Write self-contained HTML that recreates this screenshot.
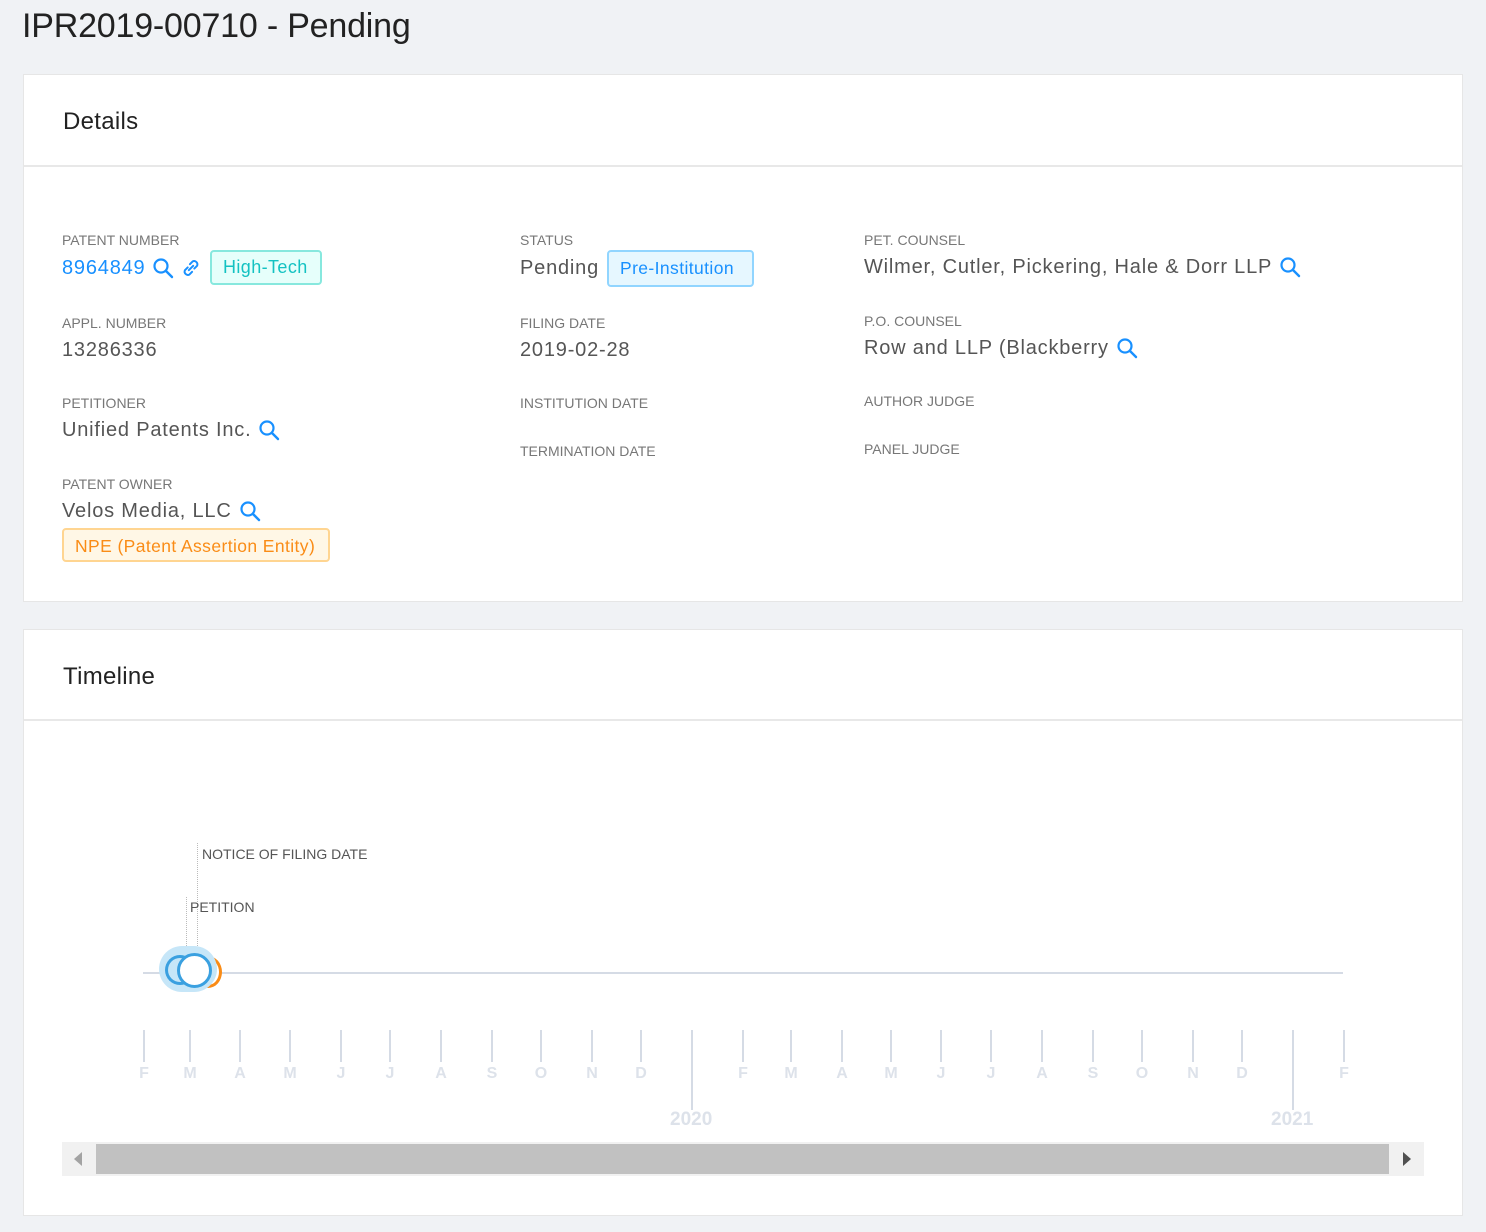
<!DOCTYPE html>
<html><head><meta charset="utf-8"><style>
*{margin:0;padding:0;box-sizing:border-box}
body{width:1486px;height:1232px;background:#f0f2f5;font-family:"Liberation Sans",sans-serif;position:relative;overflow:hidden;color:#555}
.a{position:absolute;white-space:nowrap}
.card{position:absolute;left:23px;width:1440px;background:#fff;border:1px solid #e6e6e6}
.hd{position:absolute;left:0;right:0;border-bottom:2px solid #e8e8e8}
.lb{position:absolute;font-size:14px;line-height:16px;color:#777;white-space:nowrap}
.v{position:absolute;font-size:20px;line-height:24px;color:#555;white-space:nowrap;letter-spacing:0.8px;display:flex;align-items:center}
.v svg{margin-left:7px;flex:none}
.tag{position:absolute;font-size:18px;line-height:32px;border-radius:4px;padding:0 11px;white-space:nowrap;letter-spacing:0.4px}
.m{position:absolute;top:1030px;width:2px;height:32px;background:#d5dbe5}
.ml{position:absolute;top:1065px;font-size:16px;font-weight:bold;color:#dde2ea;width:20px;margin-left:-10px;text-align:center}
</style></head><body>
<div class="a" style="left:22px;top:4px;font-size:34px;line-height:44px;color:#222;letter-spacing:-0.2px">IPR2019-00710 - Pending</div>

<div class="card" style="top:74px;height:528px">
 <div class="hd" style="top:0;height:92px"></div>
 <div class="a" style="left:39px;top:32px;font-size:24px;line-height:30px;color:#222;letter-spacing:0.3px">Details</div>
</div>

<div class="lb" style="left:62px;top:232px">PATENT NUMBER</div>
<div class="v" style="left:62px;top:256px;color:#1890ff">8964849<svg width="22" height="22" viewBox="0 0 22 22"><circle cx="9" cy="9" r="6.5" fill="none" stroke="#1890ff" stroke-width="2.2"/><path d="M14 14l6 6" stroke="#1890ff" stroke-width="2.4" stroke-linecap="round"/></svg><svg width="22" height="22" viewBox="0 0 20 20" style="margin-left:6px"><path d="M8 12l4-4M7 9.5l-2.5 2.5a3 3 0 0 0 4 4L11 13.5M13 10.5l2.5-2.5a3 3 0 0 0-4-4L9 6.5" fill="none" stroke="#1890ff" stroke-width="1.8" stroke-linecap="round"/></svg></div>
<div class="tag" style="left:210px;top:250px;width:112px;background:#e6fffb;border:2px solid #87e8de;color:#13c2c2;line-height:31px">High-Tech</div>

<div class="lb" style="left:62px;top:315px">APPL. NUMBER</div>
<div class="v" style="left:62px;top:338px">13286336</div>
<div class="lb" style="left:62px;top:395px">PETITIONER</div>
<div class="v" style="left:62px;top:418px">Unified Patents Inc.<svg width="22" height="22" viewBox="0 0 22 22"><circle cx="9" cy="9" r="6.5" fill="none" stroke="#1890ff" stroke-width="2.2"/><path d="M14 14l6 6" stroke="#1890ff" stroke-width="2.4" stroke-linecap="round"/></svg></div>
<div class="lb" style="left:62px;top:476px">PATENT OWNER</div>
<div class="v" style="left:62px;top:499px">Velos Media, LLC<svg width="22" height="22" viewBox="0 0 22 22"><circle cx="9" cy="9" r="6.5" fill="none" stroke="#1890ff" stroke-width="2.2"/><path d="M14 14l6 6" stroke="#1890ff" stroke-width="2.4" stroke-linecap="round"/></svg></div>
<div class="tag" style="left:62px;top:528px;width:268px;height:34px;background:#fff7e6;border:2px solid #ffd591;color:#fa8c16;line-height:32px;font-size:17.5px">NPE (Patent Assertion Entity)</div>

<div class="lb" style="left:520px;top:232px">STATUS</div>
<div class="v" style="left:520px;top:256px">Pending</div>
<div class="tag" style="left:607px;top:250px;width:147px;background:#e6f7ff;border:2px solid #91d5ff;color:#1890ff;line-height:33px;font-size:17.5px">Pre-Institution</div>
<div class="lb" style="left:520px;top:315px">FILING DATE</div>
<div class="v" style="left:520px;top:338px">2019-02-28</div>
<div class="lb" style="left:520px;top:395px">INSTITUTION DATE</div>
<div class="lb" style="left:520px;top:443px">TERMINATION DATE</div>

<div class="lb" style="left:864px;top:232px">PET. COUNSEL</div>
<div class="v" style="left:864px;top:255px">Wilmer, Cutler, Pickering, Hale &amp; Dorr LLP<svg width="22" height="22" viewBox="0 0 22 22"><circle cx="9" cy="9" r="6.5" fill="none" stroke="#1890ff" stroke-width="2.2"/><path d="M14 14l6 6" stroke="#1890ff" stroke-width="2.4" stroke-linecap="round"/></svg></div>
<div class="lb" style="left:864px;top:313px">P.O. COUNSEL</div>
<div class="v" style="left:864px;top:336px">Row and LLP (Blackberry<svg width="22" height="22" viewBox="0 0 22 22"><circle cx="9" cy="9" r="6.5" fill="none" stroke="#1890ff" stroke-width="2.2"/><path d="M14 14l6 6" stroke="#1890ff" stroke-width="2.4" stroke-linecap="round"/></svg></div>
<div class="lb" style="left:864px;top:393px">AUTHOR JUDGE</div>
<div class="lb" style="left:864px;top:441px">PANEL JUDGE</div>

<div class="card" style="top:629px;height:587px">
 <div class="hd" style="top:0;height:91px"></div>
 <div class="a" style="left:39px;top:32px;font-size:24px;line-height:30px;color:#222;letter-spacing:0.3px">Timeline</div>
</div>

<div class="a" style="left:197px;top:843px;height:107px;border-left:1px dotted #bbb"></div>
<div class="a" style="left:186px;top:897px;height:53px;border-left:1px dotted #bbb"></div>
<div class="a" style="left:202px;top:846px;font-size:14px;color:#555">NOTICE OF FILING DATE</div>
<div class="a" style="left:190px;top:899px;font-size:14px;color:#555">PETITION</div>
<div class="a" style="left:143px;top:972px;width:1200px;height:2px;background:#d5dbe5"></div>
<div class="a" style="left:194px;top:956px;width:28px;height:32px;border-radius:50%;border:3px solid #fa8c16;background:#fff"></div>
<div class="a" style="left:159px;top:946px;width:58px;height:46px;border-radius:23px;background:#c6e6f8"></div>
<div class="a" style="left:165px;top:955px;width:30px;height:30px;border-radius:50%;border:3px solid #3aa0e0;border-right-color:transparent"></div>
<div class="a" style="left:177px;top:953px;width:35px;height:35px;border-radius:50%;border:3.5px solid #3aa0e0;background:#fff"></div>

<div class="m" style="left:143px"></div><div class="ml" style="left:144px">F</div>
<div class="m" style="left:189px"></div><div class="ml" style="left:190px">M</div>
<div class="m" style="left:239px"></div><div class="ml" style="left:240px">A</div>
<div class="m" style="left:289px"></div><div class="ml" style="left:290px">M</div>
<div class="m" style="left:340px"></div><div class="ml" style="left:341px">J</div>
<div class="m" style="left:389px"></div><div class="ml" style="left:390px">J</div>
<div class="m" style="left:440px"></div><div class="ml" style="left:441px">A</div>
<div class="m" style="left:491px"></div><div class="ml" style="left:492px">S</div>
<div class="m" style="left:540px"></div><div class="ml" style="left:541px">O</div>
<div class="m" style="left:591px"></div><div class="ml" style="left:592px">N</div>
<div class="m" style="left:640px"></div><div class="ml" style="left:641px">D</div>
<div class="m" style="left:691px;height:80px"></div><div class="a" style="left:670px;top:1109px;font-size:19px;font-weight:bold;color:#dde2ea">2020</div>
<div class="m" style="left:742px"></div><div class="ml" style="left:743px">F</div>
<div class="m" style="left:790px"></div><div class="ml" style="left:791px">M</div>
<div class="m" style="left:841px"></div><div class="ml" style="left:842px">A</div>
<div class="m" style="left:890px"></div><div class="ml" style="left:891px">M</div>
<div class="m" style="left:940px"></div><div class="ml" style="left:941px">J</div>
<div class="m" style="left:990px"></div><div class="ml" style="left:991px">J</div>
<div class="m" style="left:1041px"></div><div class="ml" style="left:1042px">A</div>
<div class="m" style="left:1092px"></div><div class="ml" style="left:1093px">S</div>
<div class="m" style="left:1141px"></div><div class="ml" style="left:1142px">O</div>
<div class="m" style="left:1192px"></div><div class="ml" style="left:1193px">N</div>
<div class="m" style="left:1241px"></div><div class="ml" style="left:1242px">D</div>
<div class="m" style="left:1292px;height:80px"></div><div class="a" style="left:1271px;top:1109px;font-size:19px;font-weight:bold;color:#dde2ea">2021</div>
<div class="m" style="left:1343px"></div><div class="ml" style="left:1344px">F</div>

<div class="a" style="left:62px;top:1142px;width:1362px;height:34px;background:#f1f1f1"></div>
<div class="a" style="left:96px;top:1144px;width:1293px;height:30px;background:#c1c1c1"></div>
<div class="a" style="left:74px;top:1152px;width:0;height:0;border-top:7px solid transparent;border-bottom:7px solid transparent;border-right:8px solid #a3a3a3"></div>
<div class="a" style="left:1403px;top:1152px;width:0;height:0;border-top:7px solid transparent;border-bottom:7px solid transparent;border-left:8px solid #505050"></div>
</body></html>
